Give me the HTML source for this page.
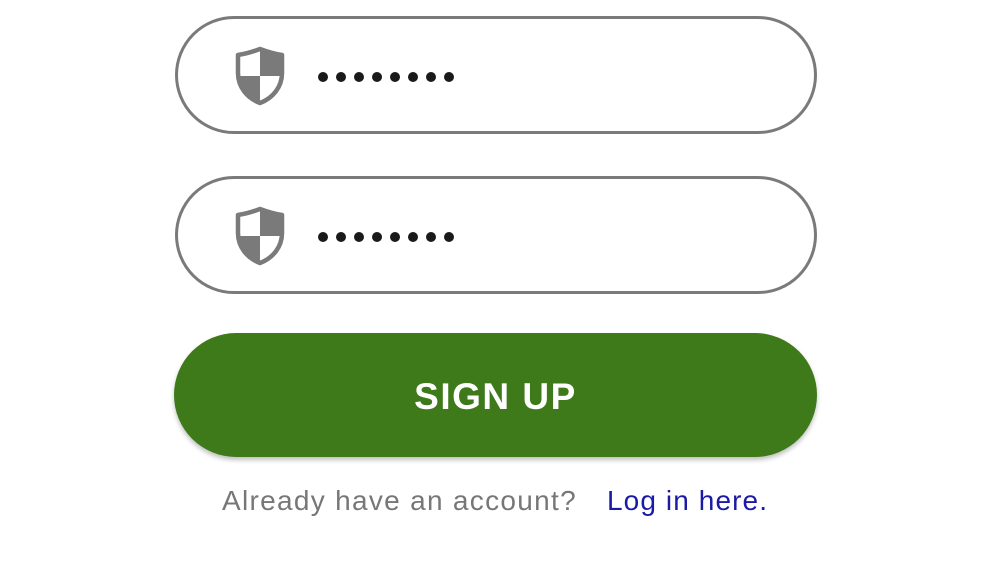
<!DOCTYPE html>
<html><head><meta charset="utf-8"><style>
html,body{margin:0;padding:0;background:#fff;width:1000px;height:561px;overflow:hidden;font-family:"Liberation Sans",sans-serif}
.box{position:absolute;left:175px;width:636px;height:112px;border:3px solid #7a7a7a;border-radius:60px;background:#fff}
.shield{position:absolute;left:56px;top:27px}
.dots{position:absolute;left:140px;top:53px}
.dots span{position:absolute;top:0;width:10px;height:10px;border-radius:50%;background:#1a1a1a}
.btn{position:absolute;left:174px;top:333px;width:643px;height:124px;border-radius:62px;background:#3e7a1a;box-shadow:0 3px 5px rgba(0,0,0,.25);color:#fff;font-size:37px;letter-spacing:1.5px;text-align:center;line-height:128px;font-weight:bold}
.foot{position:absolute;top:485px;left:222px;font-size:28px;color:#777;white-space:nowrap;letter-spacing:1.3px}
.foot a{color:#1a1aa6;text-decoration:none;position:absolute;left:385px;letter-spacing:1.1px}
</style></head><body>
<div class="box" style="top:16px">
<svg class="shield" width="52" height="60" viewBox="0 0 52 60"><path d="M26 3 C34 6 41 8 48 9 V27 C48 41 39 52 26 57 C13 52 4 41 4 27 V9 C11 8 18 6 26 3 Z" fill="#fff" stroke="#7a7a7a" stroke-width="4.5" stroke-linejoin="round"/><path d="M26 3 C34 6 41 8 48 9 V30 H26 Z" fill="#7a7a7a"/><path d="M4 30 H26 V57 C13 52 4 41 4 30 Z" fill="#7a7a7a"/></svg>
<div class="dots"><span style="left:0"></span><span style="left:18px"></span><span style="left:36px"></span><span style="left:54px"></span><span style="left:72px"></span><span style="left:90px"></span><span style="left:108px"></span><span style="left:126px"></span></div>
</div>
<div class="box" style="top:176px">
<svg class="shield" width="52" height="60" viewBox="0 0 52 60"><path d="M26 3 C34 6 41 8 48 9 V27 C48 41 39 52 26 57 C13 52 4 41 4 27 V9 C11 8 18 6 26 3 Z" fill="#fff" stroke="#7a7a7a" stroke-width="4.5" stroke-linejoin="round"/><path d="M26 3 C34 6 41 8 48 9 V30 H26 Z" fill="#7a7a7a"/><path d="M4 30 H26 V57 C13 52 4 41 4 30 Z" fill="#7a7a7a"/></svg>
<div class="dots"><span style="left:0"></span><span style="left:18px"></span><span style="left:36px"></span><span style="left:54px"></span><span style="left:72px"></span><span style="left:90px"></span><span style="left:108px"></span><span style="left:126px"></span></div>
</div>
<div class="btn">SIGN UP</div>
<div class="foot">Already have an account? <a>Log in here.</a></div>
</body></html>
